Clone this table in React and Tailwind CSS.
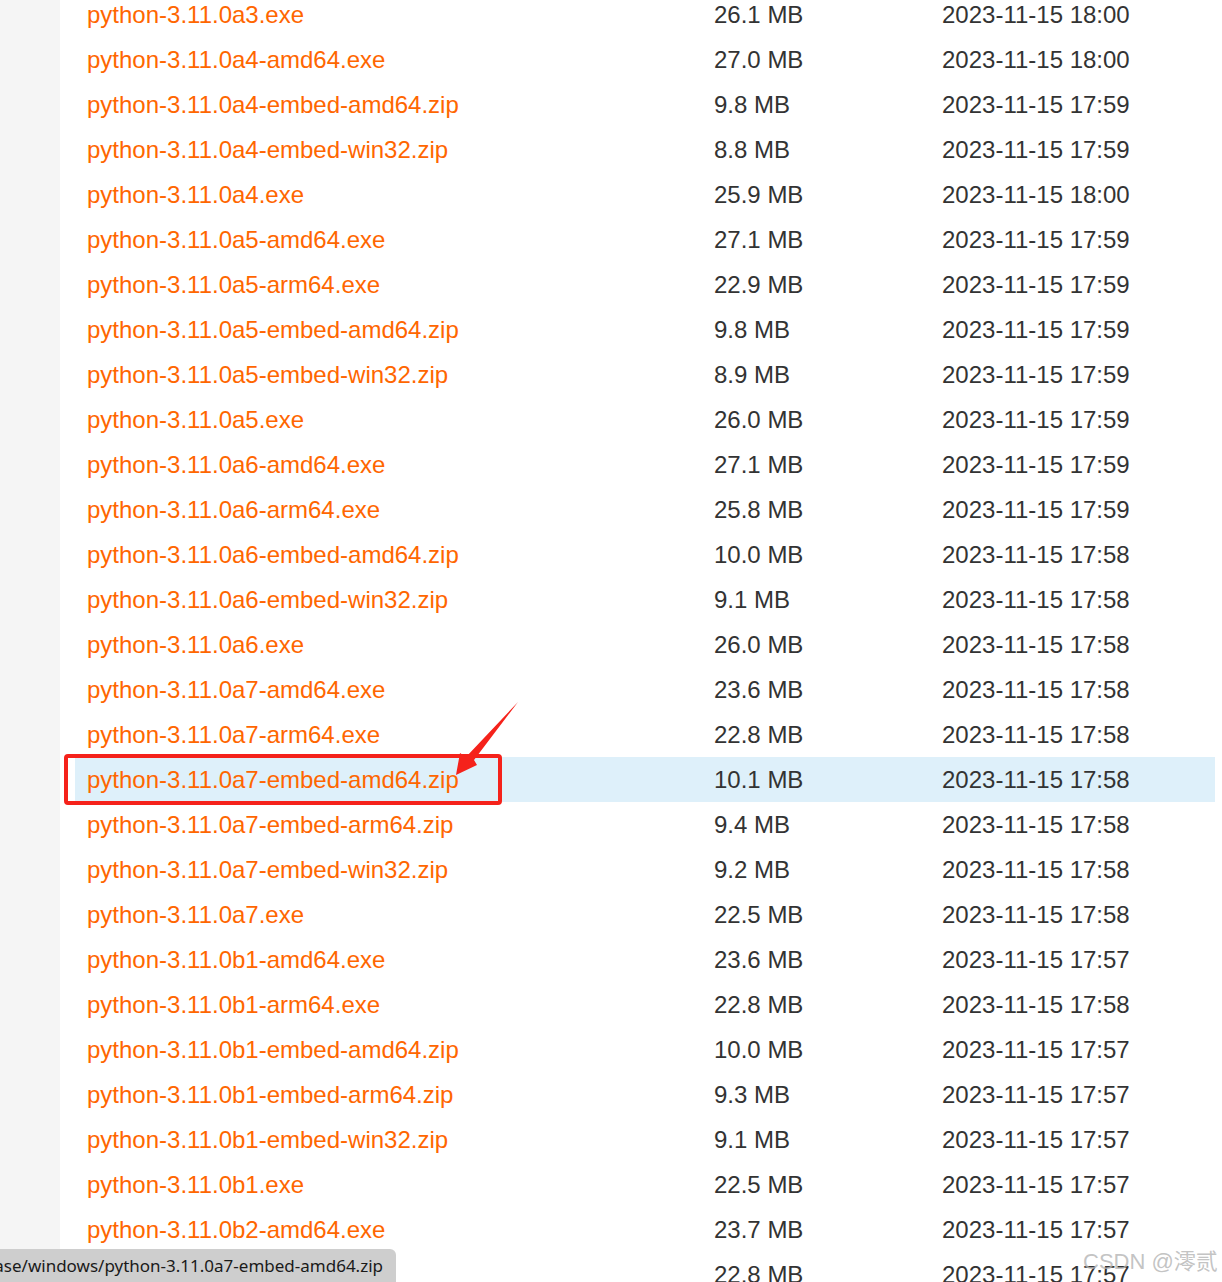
import React from "react";

const rows = [
  ["python-3.11.0a3.exe", "26.1 MB", "2023-11-15 18:00"],
  ["python-3.11.0a4-amd64.exe", "27.0 MB", "2023-11-15 18:00"],
  ["python-3.11.0a4-embed-amd64.zip", "9.8 MB", "2023-11-15 17:59"],
  ["python-3.11.0a4-embed-win32.zip", "8.8 MB", "2023-11-15 17:59"],
  ["python-3.11.0a4.exe", "25.9 MB", "2023-11-15 18:00"],
  ["python-3.11.0a5-amd64.exe", "27.1 MB", "2023-11-15 17:59"],
  ["python-3.11.0a5-arm64.exe", "22.9 MB", "2023-11-15 17:59"],
  ["python-3.11.0a5-embed-amd64.zip", "9.8 MB", "2023-11-15 17:59"],
  ["python-3.11.0a5-embed-win32.zip", "8.9 MB", "2023-11-15 17:59"],
  ["python-3.11.0a5.exe", "26.0 MB", "2023-11-15 17:59"],
  ["python-3.11.0a6-amd64.exe", "27.1 MB", "2023-11-15 17:59"],
  ["python-3.11.0a6-arm64.exe", "25.8 MB", "2023-11-15 17:59"],
  ["python-3.11.0a6-embed-amd64.zip", "10.0 MB", "2023-11-15 17:58"],
  ["python-3.11.0a6-embed-win32.zip", "9.1 MB", "2023-11-15 17:58"],
  ["python-3.11.0a6.exe", "26.0 MB", "2023-11-15 17:58"],
  ["python-3.11.0a7-amd64.exe", "23.6 MB", "2023-11-15 17:58"],
  ["python-3.11.0a7-arm64.exe", "22.8 MB", "2023-11-15 17:58"],
  ["python-3.11.0a7-embed-amd64.zip", "10.1 MB", "2023-11-15 17:58"],
  ["python-3.11.0a7-embed-arm64.zip", "9.4 MB", "2023-11-15 17:58"],
  ["python-3.11.0a7-embed-win32.zip", "9.2 MB", "2023-11-15 17:58"],
  ["python-3.11.0a7.exe", "22.5 MB", "2023-11-15 17:58"],
  ["python-3.11.0b1-amd64.exe", "23.6 MB", "2023-11-15 17:57"],
  ["python-3.11.0b1-arm64.exe", "22.8 MB", "2023-11-15 17:58"],
  ["python-3.11.0b1-embed-amd64.zip", "10.0 MB", "2023-11-15 17:57"],
  ["python-3.11.0b1-embed-arm64.zip", "9.3 MB", "2023-11-15 17:57"],
  ["python-3.11.0b1-embed-win32.zip", "9.1 MB", "2023-11-15 17:57"],
  ["python-3.11.0b1.exe", "22.5 MB", "2023-11-15 17:57"],
  ["python-3.11.0b2-amd64.exe", "23.7 MB", "2023-11-15 17:57"],
  ["python-3.11.0b2-arm64.exe", "22.8 MB", "2023-11-15 17:57"],
];

export default function App() {
  return (
    <div
      className="relative flex h-[1282px] w-[1222px] overflow-hidden bg-white"
      style={{ fontFamily: '"Liberation Sans", Arial, sans-serif' }}
    >
      <div className="w-[60px] shrink-0 bg-[#f5f5f5]" />
      <div className="flex-1 pl-[15px] pr-[7px]">
        <div className="mt-[-8px] flex flex-col">
          {rows.map(([name, size, date], i) => (
            <div
              key={i}
              className={
                i === 17
                  ? "grid h-[45px] grid-cols-[627px_228px_1fr] items-center bg-[#def0fa] pl-3 text-[24px] leading-[45px]"
                  : "grid h-[45px] grid-cols-[627px_228px_1fr] items-center pl-3 text-[24px] leading-[45px]"
              }
            >
              <a className="whitespace-nowrap text-[#ff6600]">{name}</a>
              <span className="whitespace-nowrap text-[#333333]">{size}</span>
              <span className="whitespace-nowrap text-[#333333]">{date}</span>
            </div>
          ))}
        </div>
      </div>

      {/* red highlight box */}
      <div className="pointer-events-none absolute left-[64px] top-[754px] h-[51px] w-[438px] rounded-[4px] border-[4px] border-[#f5221b]" />

      {/* red arrow */}
      <svg
        className="pointer-events-none absolute left-0 top-0"
        width="1222"
        height="1282"
        viewBox="0 0 1222 1282"
      >
        <polygon
          points="518,702 474,760 477,765 456,775 460,753 466,757"
          fill="#f5221b"
        />
      </svg>

      {/* watermark */}
      <div
        className="pointer-events-none absolute left-[1083px] top-[1247px] whitespace-nowrap text-[22px] leading-[30px] text-[#b4b4b4]/80"
        style={{ fontFamily: '"Liberation Sans", "Noto Sans CJK SC", sans-serif' }}
      >
        CSDN @澪贰
      </div>

      {/* status bar */}
      <div
        className="absolute bottom-0 left-0 flex h-[33px] w-[396px] items-center justify-end overflow-hidden rounded-tr-[6px] bg-[#cecece] pr-[13px]"
        style={{ fontFamily: '"Noto Sans", "Open Sans", sans-serif' }}
      >
        <span className="whitespace-nowrap text-[17px] leading-[33px] text-[#1a1a1a]">
          https://mirrors.huaweicloud.com/python/3.11.0/release/windows/python-3.11.0a7-embed-amd64.zip
        </span>
      </div>
    </div>
  );
}
